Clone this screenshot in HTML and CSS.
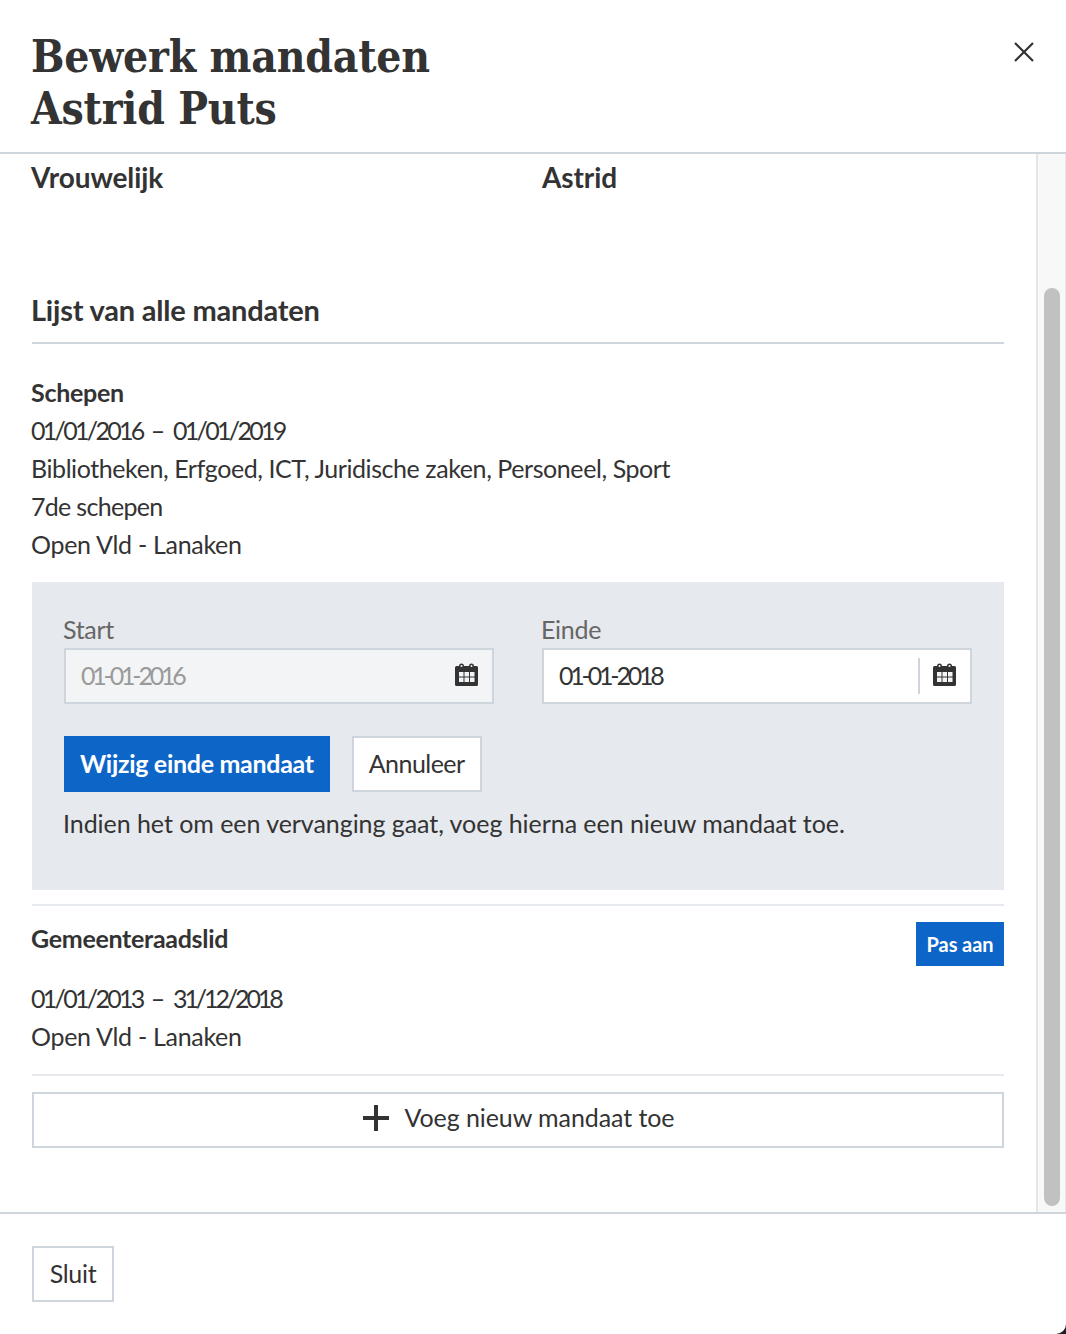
FILE: index.html
```html
<!DOCTYPE html>
<html lang="nl">
<head>
  <meta charset="UTF-8">
  <title>Bewerk mandaten</title>
  <link rel="stylesheet" href="styles.css">
</head>
<body>
  <svg class="icon-defs" width="0" height="0">
    <symbol id="cal" viewBox="0 0 23 23">
      <path fill="#333" fill-rule="evenodd" d="M1.500 3H4a2.500 2.500 0 0 1 5 0h5a2.500 2.500 0 0 1 5 0h2.500A1.500 1.500 0 0 1 23 4.500v17a1.500 1.500 0 0 1-1.500 1.500h-20A1.500 1.500 0 0 1 0 21.500v-17A1.500 1.500 0 0 1 1.500 3zM5.500 3a1 1 0 0 0 2 0a1 1 0 0 0-2 0zM15.500 3a1 1 0 0 0 2 0a1 1 0 0 0-2 0z"/>
      <path fill="#f2f4f6" d="M4 9h4.500v4.500H4zM9.500 9H14v4.500H9.500zM15 9h4.500v4.500H15zM4 14.500h4.500V19H4zM9.500 14.500H14V19H9.500zM15 14.500h4.500V19H15z"/>
    </symbol>
  </svg>

  <div class="modal">
    <header class="modal-head">
      <h1>Bewerk mandaten<br>Astrid Puts</h1>
      <button class="close" aria-label="Sluit">
        <svg width="20" height="20" viewBox="0 0 20 20"><path d="M1 1l18 18M19 1L1 19" stroke="#333" stroke-width="2.200" fill="none"/></svg>
      </button>
    </header>

    <div class="modal-body">
      <div class="content">
        <div class="person">
          <strong>Vrouwelijk</strong>
          <strong>Astrid</strong>
        </div>

        <h2>Lijst van alle mandaten</h2>

        <div class="mandaat">
          <strong>Schepen</strong>
          <p class="period"><span class="num">01/01/2016</span> – <span class="num">01/01/2019</span></p>
          <p class="tight">Bibliotheken, Erfgoed, ICT, Juridische zaken, Personeel, Sport</p>
          <p class="rank">7de schepen</p>
          <p>Open Vld - Lanaken</p>
        </div>

        <div class="edit-panel">
          <div class="date-row">
            <div>
              <label>Start</label>
              <div class="date-input disabled">
                <span class="value">01-01-2016</span>
                <svg class="cal" width="23" height="23"><use href="#cal"/></svg>
              </div>
            </div>
            <div>
              <label>Einde</label>
              <div class="date-input">
                <span class="value">01-01-2018</span>
                <span class="sep"></span>
                <svg class="cal" width="23" height="23"><use href="#cal"/></svg>
              </div>
            </div>
          </div>
          <div class="actions">
            <button class="btn primary">Wijzig einde mandaat</button>
            <button class="btn annuleer">Annuleer</button>
          </div>
          <p class="hint">Indien het om een vervanging gaat, voeg hierna een nieuw mandaat toe.</p>
        </div>

        <div class="mandaat second">
          <div class="mandaat-top">
            <strong>Gemeenteraadslid</strong>
            <button class="btn-small">Pas aan</button>
          </div>
          <p class="period"><span class="num">01/01/2013</span> – <span class="num narrow">31/12/2018</span></p>
          <p>Open Vld - Lanaken</p>
        </div>

        <button class="btn add">
          <svg width="28" height="28" viewBox="0 0 28 28"><path d="M14 1v26M1 14h26" stroke="#333" stroke-width="4" fill="none"/></svg>
          <span>Voeg nieuw mandaat toe</span>
        </button>
      </div>
      <div class="scrollbar"><div class="thumb"></div></div>
    </div>

    <footer class="modal-foot">
      <button class="btn">Sluit</button>
    </footer>
  </div>
</body>
</html>
```

FILE: styles.css
```css
* { box-sizing: border-box; }
html, body { margin: 0; height: 100%; }
body { background: #1c1c24; font-family: Lato, "Open Sans", sans-serif; font-size: 25px; line-height: 38px; color: #333; letter-spacing: -0.3px; overflow: hidden; }
p { margin: 0; }
button { font: inherit; letter-spacing: inherit; color: inherit; cursor: pointer; }
strong { font-weight: bold; }
.icon-defs { position: absolute; }

.modal { height: 1334px; background: #fff; border-bottom-right-radius: 10px; display: flex; flex-direction: column; }

.modal-head { height: 154px; border-bottom: 2px solid #cfd5dd; padding: 31px 32px 0 31px; display: flex; justify-content: space-between; align-items: flex-start; }
.modal-head h1 { margin: 0; font-family: "DejaVu Serif Condensed", "DejaVu Serif", serif; font-size: 44px; line-height: 52px; font-weight: bold; letter-spacing: -0.2px; }
.close { background: none; border: 0; padding: 0; margin: 11px 0 0 0; width: 20px; height: 20px; display: block; }
.close svg { display: block; }

.modal-body { height: 1060px; display: flex; border-bottom: 2px solid #cfd5dd; }
.content { flex: 1; padding: 4px 32px 0; }

.person { display: grid; grid-template-columns: 511px 1fr; height: 133px; font-size: 28px; margin-left: -1px; letter-spacing: -0.1px; }

h2 { margin: 0; font-size: 29px; line-height: 38px; font-weight: bold; padding-bottom: 13px; border-bottom: 2px solid #cfd5dd; letter-spacing: -0.2px; text-indent: -1px; }

.mandaat { padding-top: 29px; text-indent: -1px; }
.mandaat strong { display: block; }
.period { word-spacing: 2px; }
.num { letter-spacing: -2.7px; }
.num.narrow { letter-spacing: -3.1px; }
.tight { letter-spacing: -0.42px; }
.rank { letter-spacing: -0.7px; }

.edit-panel { background: #e6e9ed; margin-top: 19px; padding: 28px 32px 0; height: 308px; }
.date-row { display: grid; grid-template-columns: 430px 430px; column-gap: 48px; }
label { display: block; color: #666; line-height: 38px; margin-left: -1px; }
.date-input { height: 56px; border: 2px solid #cfd5dd; background: #fff; display: flex; align-items: center; padding: 0 14px 0 15px; }
.date-input .value { flex: 1; letter-spacing: -3.2px; margin-bottom: 2px; }
.date-input .sep { width: 2px; height: 36px; background: #cfd5dd; margin-right: 13px; }
.date-input.disabled { background: #f2f4f6; color: #9a9a9a; }
.cal { display: block; flex: none; margin-bottom: 3px; }

.actions { display: flex; gap: 22px; margin: 32px 0 12px; }
.btn { height: 56px; padding: 0 15px 3px; border: 2px solid #cfd5dd; background: #fff; }
.btn.primary { background: #0e65c8; border-color: #0e65c8; color: #fff; font-weight: bold; padding: 0 14px 3px; }
.btn.annuleer { letter-spacing: -0.55px; }
.hint { letter-spacing: -0.05px; margin-left: -1px; }

.second { margin-top: 14px; border-top: 2px solid #e6e9ed; border-bottom: 2px solid #e6e9ed; padding-top: 16px; padding-bottom: 19px; }
.mandaat-top { display: flex; justify-content: space-between; height: 57px; }
.mandaat-top strong { margin-top: -3px; }
.btn-small { height: 44px; width: 88px; padding: 0 0 1px; border: 0; background: #0e65c8; color: #fff; font-size: 20px; font-weight: bold; letter-spacing: -0.1px; text-indent: 0; }

.add { display: flex; width: 100%; align-items: center; justify-content: center; gap: 15px; margin-top: 16px; letter-spacing: -0.08px; }
.add svg { display: block; margin-bottom: 2px; }
.add span { margin-bottom: 4px; }

.scrollbar { width: 30px; background: #f8f8f8; border-left: 2px solid #e6e6e6; border-right: 1px solid #e6e6e6; padding: 134px 5px 0 6px; }
.thumb { height: 918px; width: 16px; background: #c1c1c1; border-radius: 8px; }

.modal-foot { flex: 1; padding: 32px; }
.modal-foot .btn { width: 82px; }
```
